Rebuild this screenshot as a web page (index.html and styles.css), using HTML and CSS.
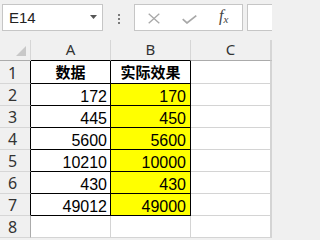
FILE: index.html
```html
<!DOCTYPE html>
<html>
<head>
<meta charset="utf-8">
<link rel="stylesheet" href="styles.css">
</head>
<body>
<div class="toolbar">
  <div class="namebox">
    <span class="ref">E14</span>
    <svg class="dd" width="7" height="4" viewBox="0 0 7 4"><polygon points="0,0 7,0 3.5,4" fill="#555"/></svg>
  </div>
  <div class="dots"><i></i><i></i><i></i></div>
  <div class="fbtns">
    <svg class="xb" width="12" height="11" viewBox="0 0 12 11"><path d="M0.7 0.7 L11.3 10.3 M11.3 0.7 L0.7 10.3" stroke="#a8a8a8" stroke-width="1.3" fill="none"/></svg>
    <svg class="ok" width="15" height="9" viewBox="0 0 15 9"><path d="M0.7 4.2 L5 8 L14.3 0.7" stroke="#a8a8a8" stroke-width="1.7" fill="none"/></svg>
    <span class="fx">f<sub>x</sub></span>
  </div>
  <div class="finput"></div>
</div>
<div class="sheet">
  <div class="corner"><svg width="30" height="20" viewBox="0 0 30 20"><polygon points="16,16 26,6 26,16" fill="#c8c8c8"/></svg></div>
  <div class="ch top">A</div><div class="ch top">B</div><div class="ch">C</div><div class="ch"></div>

  <div class="rh in r1">1</div><div class="c a t r1 cj">数据</div><div class="c b t r1 cj">实际效果</div><div class="c r1"></div><div class="c r1"></div>
  <div class="rh in">2</div><div class="c a t">172</div><div class="c b t y">170</div><div class="c"></div><div class="c"></div>
  <div class="rh in">3</div><div class="c a t">445</div><div class="c b t y">450</div><div class="c"></div><div class="c"></div>
  <div class="rh in">4</div><div class="c a t">5600</div><div class="c b t y">5600</div><div class="c"></div><div class="c"></div>
  <div class="rh in">5</div><div class="c a t">10210</div><div class="c b t y">10000</div><div class="c"></div><div class="c"></div>
  <div class="rh in">6</div><div class="c a t">430</div><div class="c b t y">430</div><div class="c"></div><div class="c"></div>
  <div class="rh in">7</div><div class="c a t">49012</div><div class="c b t y">49000</div><div class="c"></div><div class="c"></div>
  <div class="rh">8</div><div class="c"></div><div class="c"></div><div class="c"></div><div class="c"></div>
</div>
</body>
</html>
```

FILE: styles.css
```css
html, body {
  margin: 0;
  padding: 0;
  background: #f0f0f0;
  overflow: hidden;
  font-family: "Liberation Sans", Arial, sans-serif;
}
body {
  width: 272px;
  height: 238px;
}
.toolbar {
  width: 272px;
  height: 40px;
  display: flex;
  align-items: flex-start;
  padding: 4px 0 0 2px;
  box-sizing: border-box;
  overflow: hidden;
}
.namebox {
  width: 101px;
  height: 27px;
  flex: none;
  box-sizing: border-box;
  border: 1px solid #c6c6c6;
  background: #fff;
  display: flex;
  align-items: center;
}
.ref {
  flex: 1;
  padding-left: 6px;
  font-size: 15px;
  color: #222;
  line-height: 17px;
}
.dd {
  margin-right: 5px;
  margin-top: -1px;
  display: block;
}
.dots {
  margin-left: 15px;
  margin-top: 10px;
  display: flex;
  flex-direction: column;
  gap: 2px;
  flex: none;
}
.dots i {
  display: block;
  width: 2px;
  height: 2px;
  background: #7a7a7a;
}
.fbtns {
  margin-left: 14px;
  width: 109px;
  height: 27px;
  flex: none;
  box-sizing: border-box;
  border: 1px solid #c6c6c6;
  background: #fff;
  display: flex;
  align-items: center;
  padding-left: 13px;
}
.fbtns svg { display: block; }
.xb { margin-top: 1px; }
.ok { margin-left: 22px; margin-top: 4px; }
.fx {
  margin-left: 22px;
  font-family: "Liberation Serif", "Times New Roman", serif;
  font-style: italic;
  font-size: 16px;
  color: #444;
  line-height: 16px;
}
.fx sub {
  font-size: 11px;
  vertical-align: -2px;
}
.finput {
  margin-left: 4px;
  flex: 1;
  height: 27px;
  box-sizing: border-box;
  border: 1px solid #c6c6c6;
  border-right: none;
  background: #fff;
}
.sheet {
  width: 272px;
  overflow: hidden;
  display: grid;
  grid-template-columns: 31px 80px 80px 80px 1fr;
  grid-template-rows: 21px 23px repeat(7, 22px);
}
.sheet > div {
  box-sizing: border-box;
  min-width: 0;
  overflow: hidden;
}
.corner {
  border-right: 1px solid #d6d6d6;
  border-bottom: 1px solid #ababab;
}
.corner svg { display: block; }
.ch {
  background: #f0f0f0;
  border-right: 1px solid #d6d6d6;
  border-bottom: 1px solid #ababab;
  text-align: center;
  font-family: "Noto Sans", "Liberation Sans", sans-serif;
  font-size: 15px;
  line-height: 17px;
  padding-top: 1px;
  color: #333;
}
.ch.top { border-bottom-color: #000; }
.rh {
  background: #f0f0f0;
  border-right: 1px solid #ababab;
  border-bottom: 1px solid #d6d6d6;
  text-align: center;
  padding-right: 5px;
  padding-top: 3px;
  font-family: "Noto Sans", "Liberation Sans", sans-serif;
  font-size: 16px;
  line-height: 17px;
  color: #333;
}
.rh.in { border-right-color: #000; }
.rh.r1 { padding-top: 4px; }
.c {
  background: #fff;
  border-right: 1px solid #d4d4d4;
  border-bottom: 1px solid #d4d4d4;
  font-size: 16px;
  line-height: 19px;
  padding-top: 3px;
  color: #000;
  white-space: nowrap;
}
.c.t {
  border-right-color: #000;
  border-bottom-color: #000;
  text-align: right;
}
.c.a { padding-right: 3px; }
.c.b { padding-right: 4px; }
.c.y { background: #ffff00; }
.c.cj {
  text-align: center;
  padding: 0;
  font-family: "Noto Sans CJK SC", sans-serif;
  font-weight: bold;
  font-size: 15px;
  line-height: 22px;
}
```
